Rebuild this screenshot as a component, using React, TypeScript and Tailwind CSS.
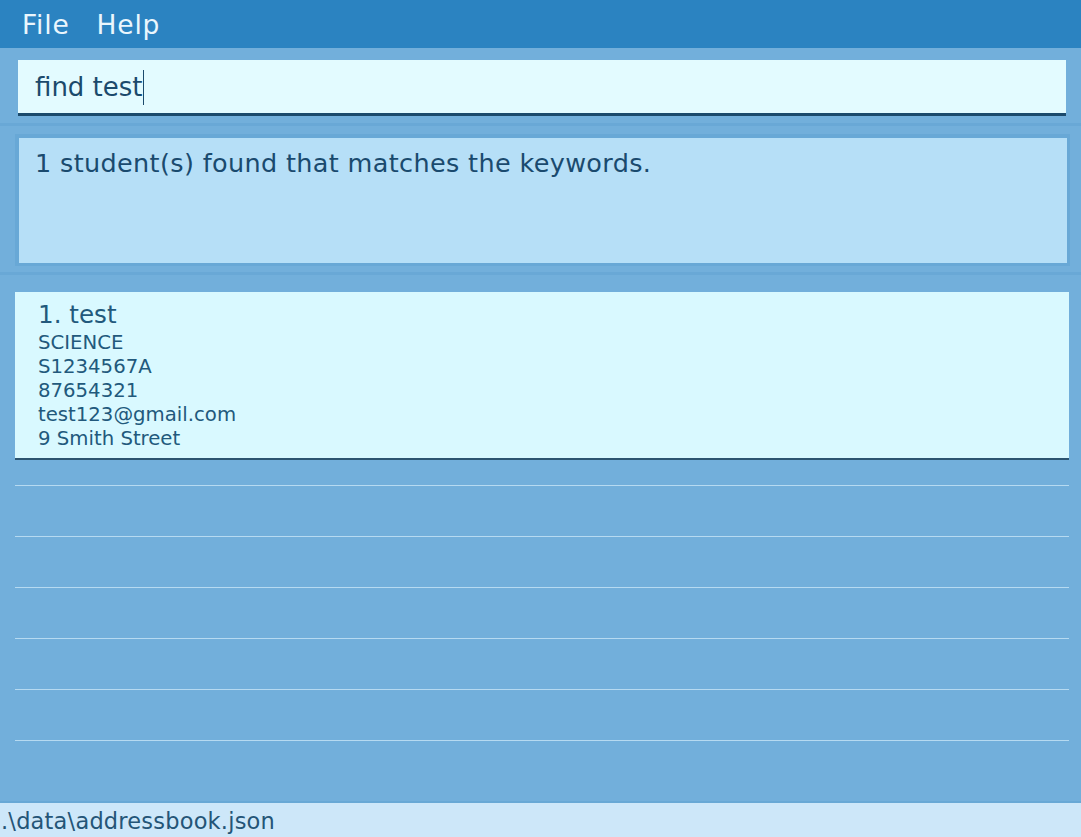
import React from "react";

const font = { fontFamily: '"DejaVu Sans", Verdana, sans-serif' };

const person = {
  name: "test",
  faculty: "SCIENCE",
  matric: "S1234567A",
  phone: "87654321",
  email: "test123@gmail.com",
  address: "9 Smith Street",
};

function MenuBar() {
  return (
    <div className="flex h-[48px] items-center gap-[27px] bg-[#2b83c1] pl-[22px] pt-[2px] text-[26.5px] tracking-[0.8px] text-[#eaf6fd]">
      <span>File</span>
      <span>Help</span>
    </div>
  );
}

function CommandBox() {
  return (
    <div className="bg-[#72afdb] px-[18px] pt-[12px] pb-[7px]">
      <div className="-mr-[3px] flex h-[56px] items-center border-b-[3px] border-[#1b4a6c] bg-[#e3fbff] pl-[17px] pr-[3px] text-[26px] text-[#1b4a6c]">
        <span className="mt-[2px]">find test</span>
        <span className="mt-[1px] h-[35px] w-px bg-[#1b4a6c]" />
      </div>
    </div>
  );
}

function ResultDisplay() {
  return (
    <div className="bg-[#72afdb] pl-[15px] pr-[11px] pt-[8px] pb-[6px]">
      <div className="h-[132px] border-l-4 border-t-4 border-r-[3px] border-b-[3px] border-[#68a8d6] bg-[#b6dff7] pl-[16px] pt-[6px] text-[25.5px] tracking-[0.35px] text-[#1a4a6e]">
        1 student(s) found that matches the keywords.
      </div>
    </div>
  );
}

function PersonCard() {
  return (
    <div className="border-b-2 border-[#2c5470] bg-[#d9f9ff] pl-[23px] pt-[9px] pb-[7px] text-[#22597c]">
      <div className="text-[24.6px] leading-[28px]">1. {person.name}</div>
      <div className="mt-[2px] text-[19.7px] leading-[24px]">
        <div>{person.faculty}</div>
        <div>{person.matric}</div>
        <div>{person.phone}</div>
        <div>{person.email}</div>
        <div>{person.address}</div>
      </div>
    </div>
  );
}

function PersonList() {
  return (
    <div className="flex-1 bg-[#72afdb] pl-[15px] pr-[12px] pt-[17px]">
      <PersonCard />
      <div className="h-[26px] border-b border-[#b6daf1]" />
      {[0, 1, 2, 3, 4].map((i) => (
        <div key={i} className="h-[51px] border-b border-[#b6daf1]" />
      ))}
    </div>
  );
}

export default function App() {
  return (
    <div className="flex h-[837px] w-[1081px] flex-col overflow-hidden bg-[#72afdb]" style={font}>
      <MenuBar />
      <CommandBox />
      <div className="h-[3px] bg-[#69a8d6]" />
      <ResultDisplay />
      <div className="h-[3px] bg-[#69a8d6]" />
      <PersonList />
      <div className="h-[2px] bg-[#68a8d5]" />
      <div className="h-[34px] bg-[#cde7f9] pl-[1px] text-[22.5px] leading-[36px] tracking-[0.2px] text-[#245577]">
        .\data\addressbook.json
      </div>
    </div>
  );
}
